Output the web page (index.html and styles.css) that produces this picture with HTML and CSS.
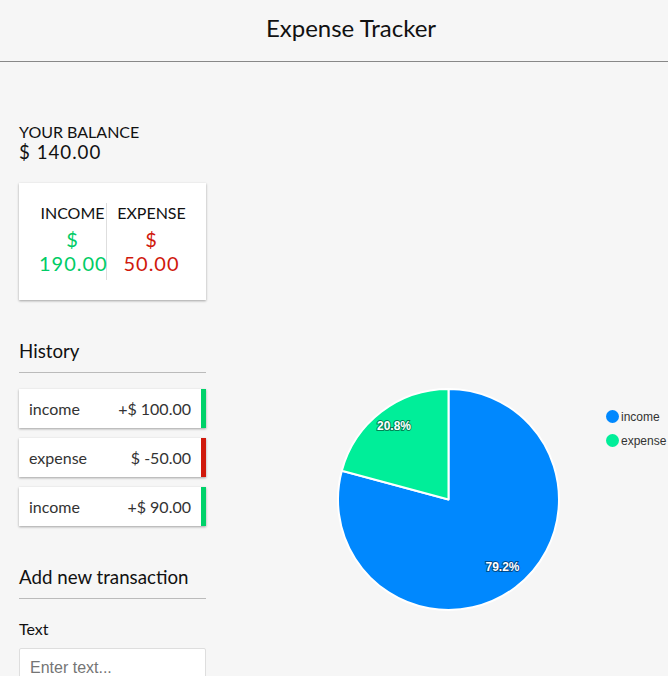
FILE: index.html
```html
<!DOCTYPE html>
<html lang="en">
<head>
<meta charset="utf-8">
<title>Expense Tracker</title>
<link rel="stylesheet" href="styles.css">
</head>
<body>
<header class="app-header">
  <h1 class="app-title">Expense Tracker</h1>
</header>
<main class="main">
  <section class="left">
    <h4 class="balance-label">Your Balance</h4>
    <h2 class="balance">$ 140.00</h2>

    <div class="inc-exp">
      <div class="inc-col">
        <h4 class="col-title">Income</h4>
        <p class="money plus">$ 190.00</p>
      </div>
      <div class="exp-col">
        <h4 class="col-title">Expense</h4>
        <p class="money minus">$ 50.00</p>
      </div>
    </div>

    <h3 class="section-title">History</h3>
    <ul class="list">
      <li class="item plus"><span>income</span><span>+$ 100.00</span></li>
      <li class="item minus"><span>expense</span><span>$ -50.00</span></li>
      <li class="item plus"><span>income</span><span>+$ 90.00</span></li>
    </ul>

    <h3 class="section-title">Add new transaction</h3>
    <form class="form">
      <div class="form-control">
        <label class="label" for="text">Text</label>
        <input class="input" type="text" id="text" placeholder="Enter text...">
      </div>
      <div class="form-control">
        <label class="label" for="amount">Amount</label>
        <input class="input" type="number" id="amount" placeholder="Enter amount...">
      </div>
    </form>
  </section>

  <section class="chart">
    <svg class="chart-svg" width="450" height="260" viewBox="0 0 450 260">
      <path class="slice" d="M230.5 129.5 L230.5 19 A110.5 110.5 0 1 1 123.82 100.67 Z" fill="#0088FE"/>
      <path class="slice" d="M230.5 129.5 L123.82 100.67 A110.5 110.5 0 0 1 230.5 19 Z" fill="#00EE99"/>
      <text class="pie-label" x="176" y="60" text-anchor="middle">20.8%</text>
      <text class="pie-label" x="284.5" y="200.5" text-anchor="middle">79.2%</text>
      <circle cx="394.5" cy="46.5" r="6.5" fill="#0088FE"/>
      <text class="legend-text" x="403" y="50.5">income</text>
      <circle cx="394.5" cy="70.5" r="6.5" fill="#00EE99"/>
      <text class="legend-text" x="403" y="74.5">expense</text>
    </svg>
  </section>
</main>
</body>
</html>
```
FILE: styles.css
```css
* { box-sizing: border-box; }

body {
  margin: 0;
  background: #f6f6f6;
  font-family: Lato, "Noto Sans", sans-serif;
  color: #111;
}

.app-header {
  height: 62px;
  border-bottom: 1px solid #888;
  display: flex;
  align-items: center;
  justify-content: center;
  padding-left: 34px;
}

.app-title {
  margin: 0 0 6px 0;
  font-size: 24px;
  font-weight: 400;
  color: #111;
}

.main {
  display: flex;
  padding: 60px 0 0 19px;
}

.left {
  width: 187px;
  flex: 0 0 187px;
}

.balance-label {
  margin: 0;
  font-size: 16px;
  font-weight: 400;
  text-transform: uppercase;
  color: #111;
}

.balance {
  margin: 0;
  font-size: 18.72px;
  font-weight: 400;
  letter-spacing: 1px;
  color: #111;
}

.inc-exp {
  background: #fff;
  box-shadow: 0 1px 3px rgba(0,0,0,0.12), 0 1px 2px rgba(0,0,0,0.24);
  padding: 20px;
  margin: 20px 0;
  display: grid;
  grid-template-columns: 68px 1fr;
}

.inc-col, .exp-col {
  text-align: center;
}

.inc-col {
  border-right: 1px solid #dedede;
}

.exp-col {
  padding-left: 10px;
}

.col-title {
  margin: 0;
  font-size: 16px;
  font-weight: 400;
  text-transform: uppercase;
  color: #111;
}

.money {
  margin: 5px 0;
  font-size: 20px;
  letter-spacing: 1px;
}

.money.plus { color: #00cc66; }
.money.minus { color: #d0190c; }

.section-title {
  margin: 40px 0 10px;
  padding-bottom: 10px;
  border-bottom: 1px solid #bbb;
  font-size: 18.72px;
  font-weight: 400;
  color: #111;
}

.list {
  list-style: none;
  padding: 0;
  margin: 16px 0 40px;
}

.item {
  background: #fff;
  box-shadow: 0 1px 3px rgba(0,0,0,0.12), 0 1px 2px rgba(0,0,0,0.24);
  color: #333;
  display: flex;
  justify-content: space-between;
  padding: 10px;
  margin: 10px 0;
  font-size: 16px;
}

.item.plus { border-right: 5px solid #00d26a; }
.item.minus { border-right: 5px solid #d0190c; }

.label {
  display: inline-block;
  margin: 10px 0;
  font-size: 16px;
  color: #111;
}

.input {
  display: block;
  width: 100%;
  border: 1px solid #dedede;
  border-radius: 2px;
  background: #fff;
  font-family: "Liberation Sans", Arial, sans-serif;
  font-size: 16px;
  padding: 10px;
}

.chart {
  flex: 1;
  padding: 248px 0 0 12px;
}

.chart-svg {
  display: block;
}

.slice {
  stroke: #fff;
  stroke-width: 2;
  stroke-linejoin: round;
}

.pie-label {
  font-family: "Liberation Sans", Arial, sans-serif;
  font-size: 12px;
  font-weight: 700;
  fill: #fff;
  stroke: rgba(0,0,0,0.45);
  stroke-width: 2px;
  paint-order: stroke;
}

.legend-text {
  font-family: "Liberation Sans", Arial, sans-serif;
  font-size: 12px;
  fill: #333;
}
```
